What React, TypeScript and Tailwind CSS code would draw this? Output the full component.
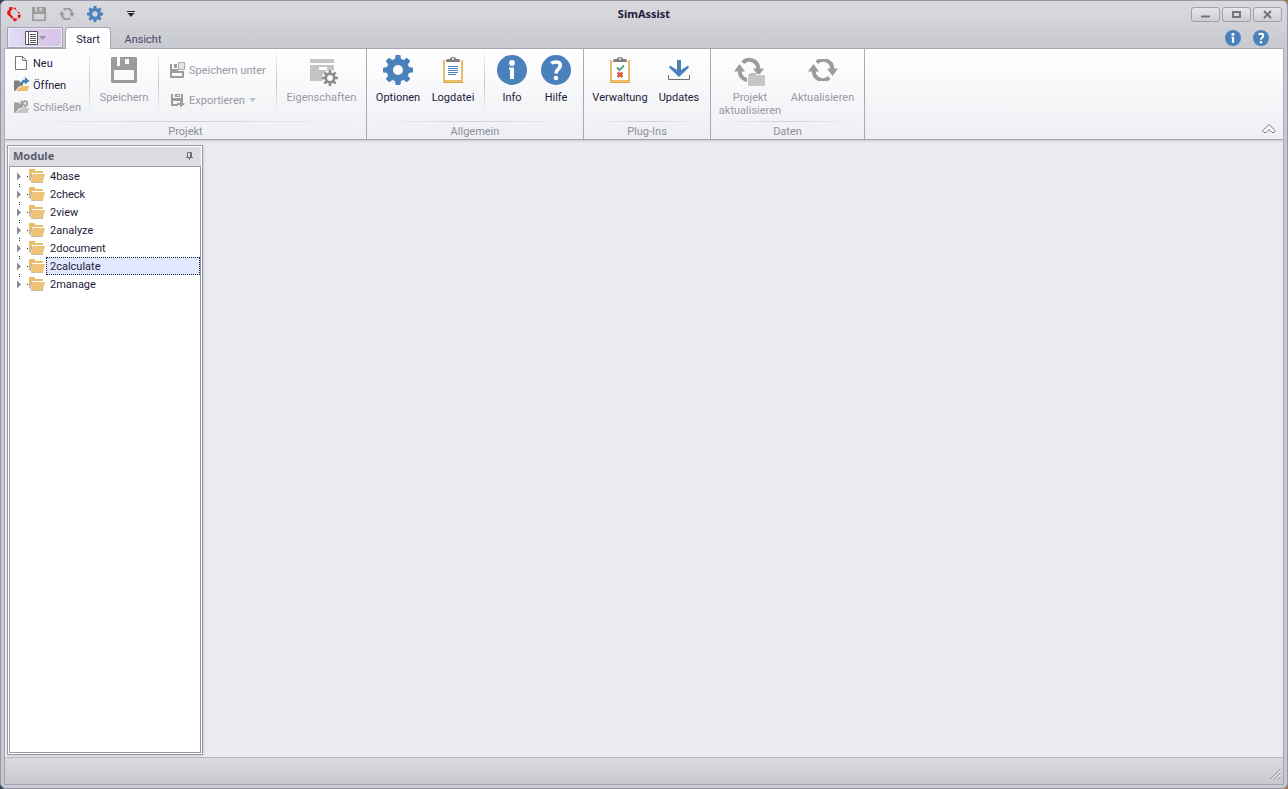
import React, { useState } from 'react';

type IconProps = { className?: string };

const BLUE = '#4a81bb';
const GREY = '#9c9c9c';

function Gear({ className = '', color = BLUE }: IconProps & { color?: string }) {
  return (
    <svg viewBox="0 0 30 30" className={className} aria-hidden="true">
      <circle cx="15" cy="15" r="8.2" fill="none" stroke={color} strokeWidth="6.4" />
      {[0, 45, 90, 135, 180, 225, 270, 315].map((a) => (
        <path key={a} d="M12 5 L12.4 0.8 Q12.5 0 13.3 0 H16.7 Q17.5 0 17.6 0.8 L18 5 Z" fill={color} transform={`rotate(${a} 15 15)`} />
      ))}
    </svg>
  );
}

function Floppy({ className = '' }: IconProps) {
  return (
    <svg viewBox="0 0 26 26" className={className} aria-hidden="true">
      <path
        fillRule="evenodd"
        fill={GREY}
        d="M1.5 0 H6 V9 H20 V0 H24.5 Q26 0 26 1.5 V24.5 Q26 26 24.5 26 H1.5 Q0 26 0 24.5 V1.5 Q0 0 1.5 0 Z M4 13 Q3 13 3 14 V22 Q3 23 4 23 H22 Q23 23 23 22 V14 Q23 13 22 13 Z"
      />
      <path fillRule="evenodd" fill={GREY} d="M9 0 H20 V9 H9 Z M14 2 V7 H18 V2 Z" />
    </svg>
  );
}

function RefreshShape() {
  return (
    <>
      <path d="M8.800 3.600 A9 9 0 0 1 24.200 10.500" fill="none" stroke={GREY} strokeWidth="4" />
      <path d="M21.200 18.400 A9 9 0 0 1 5.800 11.500" fill="none" stroke={GREY} strokeWidth="4" />
      <path d="M0 12.500 L5.500 5 L11 12.500 Z M19 9.500 H30 L24.500 17 Z" fill={GREY} />
    </>
  );
}

function Refresh({ className = '' }: IconProps) {
  return (
    <svg viewBox="0 0 30 22" className={className} aria-hidden="true">
      <RefreshShape />
    </svg>
  );
}

function RefreshProject() {
  return (
    <svg viewBox="0 -5 32 32" className="size-8" aria-hidden="true">
      <RefreshShape />
      <path d="M13 17 H14 L15 14 H22 L23 15 H30 Q32 15 32 17 V28 H13 Z" fill="#fbfbfc" />
      <path d="M14 17 Q14 16 15 16 L16 15 H21 L22 16 H30 Q31 16 31 17 V26 Q31 27 30 27 H15 Q14 27 14 26 Z" fill="#c6c6c6" />
      <path d="M15 15.500 L22 14.500" stroke={GREY} fill="none" />
    </svg>
  );
}

function InfoDisc({ className = '' }: IconProps) {
  return (
    <svg viewBox="0 0 30 30" className={className} aria-hidden="true">
      <circle cx="15" cy="15" r="15" fill={BLUE} />
      <circle cx="15" cy="8" r="2.900" fill="#fff" />
      <path d="M12 12.500 H17 V24 H13 V14.500 H12 Z" fill="#fff" />
    </svg>
  );
}

function HelpDisc({ className = '' }: IconProps) {
  return (
    <svg viewBox="0 0 30 30" className={className} aria-hidden="true">
      <circle cx="15" cy="15" r="15" fill={BLUE} />
      <path d="M10.500 8.500 C12 6.800 19.500 5.600 19.300 10.800 C19.200 14 15 14 15 18.500" fill="none" stroke="#fff" strokeWidth="3.600" />
      <circle cx="15" cy="23" r="2.300" fill="#fff" />
    </svg>
  );
}

function Clipboard({ check = false }: { check?: boolean }) {
  return (
    <svg viewBox="0 0 20 26" className="h-[26px] w-5" aria-hidden="true">
      <path d="M0 3 H20 V26 H0 Z" fill="#eabd6b" />
      <path d="M2 3 H18 V23 H2 Z" fill="#fff" />
      <path d="M0 25.500 H20" stroke="#dda743" />
      <path d="M3 5 V4 Q3 2 5 2 H7 Q7 0 10 0 Q13 0 13 2 H15 Q17 2 17 4 V5 Z" fill="#7d7d7d" />
      <circle cx="10" cy="2" r="1" fill="#fff" />
      {check ? (
        <>
          <path d="M7 10.500 L9.500 13 L14 8.500" fill="none" stroke="#5ba38c" strokeWidth="2" />
          <path d="M7.500 15.500 L12.500 20 M12.500 15.500 L7.500 20" stroke="#dc5a3c" strokeWidth="2.400" />
        </>
      ) : (
        <path d="M5 9.500 H15 M5 11.500 H15 M5 13.500 H15 M5 15.500 H15 M5 17.500 H13" stroke={BLUE} />
      )}
    </svg>
  );
}

function Download() {
  return (
    <svg viewBox="0 0 22 20" className="h-5 w-[22px]" aria-hidden="true">
      <path d="M9 0 H13 V10 L20 5.500 L21 7.500 L11 17 L1 7.500 L2 5.500 L9 10 Z" fill={BLUE} />
      <path d="M0.500 15 V19.500 H21.500 V15" fill="none" stroke="#6f6f6f" />
    </svg>
  );
}

function Properties() {
  return (
    <svg viewBox="-4 -5 32 32" className="size-8" aria-hidden="true">
      <path d="M0 0 H24 V4 H0 Z M0 6 H24 V22 H0 Z" fill="#c4c4c4" />
      <path d="M9 8 H17 V11 H9 Z" fill="#fff" />
      <circle cx="20" cy="19" r="8" fill="#fbfbfc" />
      <circle cx="20" cy="19" r="4.300" fill="none" stroke="#8d8d8d" strokeWidth="2.800" />
      {[0, 45, 90, 135, 180, 225, 270, 315].map((a) => (
        <path key={a} d="M18.700 11 H21.300 V14.500 H18.700 Z" fill="#8d8d8d" transform={`rotate(${a} 20 19)`} />
      ))}
    </svg>
  );
}

function PageIcon() {
  return (
    <svg viewBox="0 0 16 16" className="size-4" aria-hidden="true">
      <path d="M1.500 1.500 H8.500 L12.500 5.500 V14.500 H1.500 Z" fill="#fff" stroke="#767676" />
      <path d="M8.500 1.500 V5.500 H12.500" fill="none" stroke="#767676" />
    </svg>
  );
}

function OpenIcon({ closed = false }: { closed?: boolean }) {
  return (
    <svg viewBox="0 0 16 16" className="size-4" aria-hidden="true">
      <path d="M0 3.500 H5 L6 5 H9 V8.500 L5 9.500 L1 14 H0 Z" fill={closed ? '#a0a0a0' : '#808080'} />
      <path d="M5.500 10.500 L9 9 H15.500 L13.500 14 H2 Z" fill={closed ? '#c5c5c5' : '#eabd6b'} />
      {closed ? (
        <path d="M7.500 1.500 V5.500 H11 M8 4.500 Q10.500 0.500 13 3 Q14.500 6 10 8" fill="none" stroke="#a0a0a0" strokeWidth="1.800" />
      ) : (
        <path d="M7 8 Q6.500 2.500 11 2.500 V0 L15.500 4 L11 7.500 V5.500 Q8.500 5.500 7 8 Z" fill={BLUE} />
      )}
    </svg>
  );
}

function SaveAsIcon() {
  return (
    <svg viewBox="0 0 16 16" className="size-4" aria-hidden="true">
      <path fillRule="evenodd" fill={GREY} d="M0 2 H2 V7 H8 V9 H14 V16 H0 Z M2 11 V14 H12 V11 Z M4 2 H7 V6 H4 Z" />
      <path d="M8.500 0.500 H14.500 V7.500 H8.500 Z" fill="#e4e4e4" stroke="#ababab" />
    </svg>
  );
}

function ExportIcon() {
  return (
    <svg viewBox="0 0 16 16" className="size-4" aria-hidden="true">
      <path fillRule="evenodd" fill={GREY} d="M1 2 H3 V6 H11 V2 H13 V10 H11 V9 H3 V12 H8 V14 H1 Z M5 2 H10 V5 H5 Z M7 3 V4 H9 V3 Z" />
      <path d="M7 11 H10 V8.500 L15 12 L10 15.500 V13 H7 Z" fill={GREY} />
    </svg>
  );
}

function FolderIcon() {
  return (
    <svg viewBox="0 0 16 14" className="h-3.5 w-4" aria-hidden="true">
      <path d="M0 0 H6 V2 H14 V4 H3 L1 11 H0 Z" fill="#eabd6b" />
      <path d="M1 12 L3 5" stroke="#a6a6a6" fill="none" />
      <path d="M3.500 5 H16 L14 13 H2 Z" fill="#eec377" />
      <path d="M2 13.500 H14" stroke="#c9bda6" />
    </svg>
  );
}

function AppLogo() {
  return (
    <svg viewBox="0 0 16 16" className="size-4" aria-hidden="true">
      <path d="M5 1.500 L9 2.500 L13 7 L13.500 10.500 L9 14 L5 12" fill="none" stroke="#ea5a5e" strokeWidth="0.800" />
      <path d="M3.500 1 L6 1 L6.500 3.500 L4.500 5 L4.500 8 L7.500 11.500 L6 12.500 L2.500 9.500 L1 7.500 L1.500 5 L3 4 Z" fill="#e5161d" />
      <path d="M11.500 9 L15 9 L14 12 L12.500 12.500 Z M8 11.500 L11.500 14 L9 15.500 L7 14.500 Z M8 1.500 L10 2 L10 3.500 L8.500 3.500 Z M12 6 L13.500 6 L13.500 7.500 L12 7.500 Z" fill="#e5161d" />
    </svg>
  );
}

function BigButton({ label, icon, width, disabled = false }: { label: string; icon: React.ReactNode; width: string; disabled?: boolean }) {
  return (
    <button type="button" disabled={disabled} className={`flex shrink-0 flex-col items-center gap-[5px] pt-[5px] ${width} ${disabled ? 'text-[#9898a6]' : 'text-[#1e1a3a]'}`}>
      <span className="flex h-8 items-center justify-center">{icon}</span>
      <span className="text-center leading-[13px]">{label}</span>
    </button>
  );
}

function SmallButton({ label, icon, disabled = false, menu = false }: { label: string; icon: React.ReactNode; disabled?: boolean; menu?: boolean }) {
  return (
    <button type="button" disabled={disabled} className={`flex h-[22px] items-center gap-[3px] whitespace-nowrap ${disabled ? 'text-[#9898a6]' : 'text-[#1e1a3a]'}`}>
      {icon}
      <span>{label}</span>
      {menu && (
        <svg viewBox="0 0 7 4" className="ml-px h-1 w-[7px]" aria-hidden="true">
          <path d="M0 0 H7 L3.500 4 Z" fill="#c0c0c8" />
        </svg>
      )}
    </button>
  );
}

function Divider() {
  return <span className="h-[66px] w-px shrink-0 bg-linear-to-b from-transparent via-[#c3c3cd] to-transparent" />;
}

function Group({ title, children }: { title: string; children: React.ReactNode }) {
  return (
    <section aria-label={title} className="flex shrink-0 flex-col border-r border-[#a9a9b6]">
      <div className="flex h-[72px]">{children}</div>
      <div className="mx-2 h-px bg-linear-to-r from-transparent via-[#cfcfd7] to-transparent" />
      <h2 className="h-[17px] text-center leading-5 text-[#8e8e9c]">{title}</h2>
    </section>
  );
}

function CaptionButton({ label, children }: { label: string; children: React.ReactNode }) {
  return (
    <button
      type="button"
      aria-label={label}
      className="flex h-[15px] w-[29px] items-center justify-center rounded-[3px] border border-[#a0a0ad] bg-linear-to-b from-[#e6e6ea] to-[#cdcdd4]"
    >
      <svg viewBox="0 0 11 9" className="h-[9px] w-[11px]" fill="none" stroke="#74747f" aria-hidden="true">
        {children}
      </svg>
    </button>
  );
}

const MODULES = ['4base', '2check', '2view', '2analyze', '2document', '2calculate', '2manage'];

function ModuleTree() {
  const [selected, setSelected] = useState('2calculate');
  return (
    <ul className="flex-1 border border-[#9a9aa6] bg-white">
      {MODULES.map((name, i) => (
        <li key={name} className="flex h-[18px] items-center">
          <svg viewBox="0 0 19 18" className="h-[18px] w-[19px] shrink-0" shapeRendering="crispEdges" aria-hidden="true">
            <path d="M7 5.500 L11 9.500 L7 13.500 Z" fill="#8a8a94" shapeRendering="auto" />
            {i > 0 && <path d="M9 1 H10 V2 H9 Z" fill="#222" />}
            {i < MODULES.length - 1 && <path d="M9 17 H10 V18 H9 Z" fill="#222" />}
            <path d="M17 9 H18 V10 H17 Z" fill="#222" />
          </svg>
          <FolderIcon />
          <button
            type="button"
            onClick={() => setSelected(name)}
            className={`ml-px h-[18px] flex-1 border border-dotted pl-[3px] pt-px text-left leading-4 text-[#1e1a3a] ${
              selected === name ? 'border-[#1a1a3a] bg-[#e1e8fd]' : 'border-transparent'
            }`}
          >
            {name}
          </button>
        </li>
      ))}
    </ul>
  );
}

export default function App() {
  return (
    <div className="h-screen bg-linear-to-r from-[#31424e] to-[#9b7b55] text-[11px] leading-[13px]" style={{ fontFamily: 'Roboto, "Noto Sans", sans-serif' }}>
      <div className="flex h-full flex-col overflow-hidden rounded-md border border-[#9696a6] bg-[#c8c8d0] px-[3px] pb-[3px]">
        <header className="-mx-[3px] bg-linear-to-b from-[#dadade] to-[#c8c8d0] px-[3px]">
          <div className="grid h-[26px] grid-cols-[1fr_auto_1fr] items-center">
            <div className="flex items-center pl-0.5">
              <AppLogo />
              <button type="button" aria-label="Speichern" disabled className="ml-[10px]">
                <Floppy className="size-3.5" />
              </button>
              <button type="button" aria-label="Aktualisieren" disabled className="ml-[13px]">
                <Refresh className="h-3 w-4" />
              </button>
              <button type="button" aria-label="Optionen" className="ml-3">
                <Gear className="size-4" />
              </button>
              <button type="button" aria-label="Symbolleiste anpassen" className="ml-6">
                <svg viewBox="0 0 8 6" className="h-1.5 w-2" aria-hidden="true">
                  <path d="M0 0 H8 V1 H0 Z M0.500 2 H7.500 L4 6 Z" fill="#24242c" />
                </svg>
              </button>
            </div>
            <h1 className="pb-0.5 font-['Noto_Sans',sans-serif] font-bold text-[#1e1a3a]">SimAssist</h1>
            <div className="flex justify-end gap-0.5 pr-0.5">
              <CaptionButton label="Minimieren">
                <path d="M1 6.500 H10" strokeWidth="2" />
              </CaptionButton>
              <CaptionButton label="Maximieren">
                <path d="M2 2 H9 V7 H2 Z" strokeWidth="2" />
              </CaptionButton>
              <CaptionButton label="Beenden">
                <path d="M2 1 L9 8 M9 1 L2 8" strokeWidth="2" />
              </CaptionButton>
            </div>
          </div>
          <nav className="flex h-[22px] items-stretch pl-[3px] shadow-[inset_0_-1px_0_#a3a3b2]">
            <button
              type="button"
              aria-label="Anwendungsmenü"
              className="mb-px flex w-14 items-center justify-center gap-px border border-[#a3a3b2] bg-linear-to-r from-[#e2def7] via-[#dccbea] to-[#d6c4ea] inset-ring inset-ring-[#ece8f6]"
            >
              <svg viewBox="0 0 13 14" className="h-3.5 w-[13px]" aria-hidden="true">
                <path d="M0.500 0.500 H12.500 V13.500 H0.500 Z" fill="#fff" stroke="#55555d" />
                <path d="M3.500 0 V14 M5 3.500 H11 M5 5.500 H11 M5 7.500 H11 M5 9.500 H11 M5 11.500 H11" stroke="#55555d" />
              </svg>
              <svg viewBox="0 0 7 4" className="h-1 w-[7px]" aria-hidden="true">
                <path d="M0 0 H7 L3.500 4 Z" fill="#9a92a8" />
              </svg>
            </button>
            <button type="button" className="ml-0.5 w-[46px] rounded-t-sm border border-b-0 border-[#a3a3b2] bg-white pt-px text-[#1e1a3a]">
              Start
            </button>
            <button type="button" className="w-16 pt-0.5 text-[#4a4a66]">
              Ansicht
            </button>
            <span className="flex-1" />
            <button type="button" aria-label="Info">
              <InfoDisc className="size-4" />
            </button>
            <button type="button" aria-label="Hilfe" className="ml-3 mr-[15px]">
              <HelpDisc className="size-4" />
            </button>
          </nav>
        </header>

        <div className="flex min-h-0 flex-1 flex-col border border-t-0 border-[#a3a3b2] bg-[#eaebef]">
          <div className="flex h-[91px] shrink-0 border-b border-[#a3a3b2] bg-linear-to-b from-white to-[#eeeff3] shadow-[0_1px_2px_#c9c9d0]">
            <Group title="Projekt">
              <div className="flex w-[84px] flex-col pl-[9px] pt-[3px]">
                <SmallButton label="Neu" icon={<PageIcon />} />
                <SmallButton label="Öffnen" icon={<OpenIcon />} />
                <SmallButton label="Schließen" icon={<OpenIcon closed />} disabled />
              </div>
              <Divider />
              <BigButton label="Speichern" icon={<Floppy className="size-[26px]" />} width="w-[68px]" disabled />
              <Divider />
              <div className="flex w-[117px] flex-col gap-2 pl-[11px] pt-2.5">
                <SmallButton label="Speichern unter" icon={<SaveAsIcon />} disabled />
                <SmallButton label="Exportieren" icon={<ExportIcon />} disabled menu />
              </div>
              <Divider />
              <BigButton label="Eigenschaften" icon={<Properties />} width="w-[89px]" disabled />
            </Group>
            <Group title="Allgemein">
              <div className="flex pl-[3px] pr-1">
                <BigButton label="Optionen" icon={<Gear className="size-[30px]" />} width="w-14" />
                <BigButton label="Logdatei" icon={<Clipboard />} width="w-[54px]" />
              </div>
              <Divider />
              <div className="flex px-[5px]">
                <BigButton label="Info" icon={<InfoDisc className="size-[30px]" />} width="w-11" />
                <BigButton label="Hilfe" icon={<HelpDisc className="size-[30px]" />} width="w-11" />
              </div>
            </Group>
            <Group title="Plug-Ins">
              <div className="flex pl-[5px] pr-[3px]">
                <BigButton label="Verwaltung" icon={<Clipboard check />} width="w-[62px]" />
                <BigButton label="Updates" icon={<Download />} width="w-14" />
              </div>
            </Group>
            <Group title="Daten">
              <div className="flex gap-0.5 px-[5px]">
                <BigButton label="Projekt aktualisieren" icon={<RefreshProject />} width="w-[68px]" disabled />
                <BigButton label="Aktualisieren" icon={<Refresh className="h-[22px] w-[30px]" />} width="w-[73px]" disabled />
              </div>
            </Group>
            <div className="flex flex-1 items-end justify-end pb-[5px] pr-[7px]">
              <button type="button" aria-label="Menüband minimieren">
                <svg viewBox="0 0 14 10" className="h-2.5 w-3.5" fill="#fff" stroke="#70707c" strokeLinejoin="round" aria-hidden="true">
                  <path d="M7 0.500 L13 6.500 V7.500 L12 8.500 H10 L7 5.500 L4 8.500 H2 L1 7.500 V6.500 Z" />
                </svg>
              </button>
            </div>
          </div>

          <main className="flex min-h-0 flex-1 pb-0.5 pl-0.5 pt-[5px]">
            <aside className="flex w-[196px] flex-col border border-[#9a9aa6] bg-white p-px shadow-[1px_1px_2px_#cfcfd6]">
              <div className="flex h-[19px] items-center justify-between bg-[#dcdce1] pb-0.5 pl-1 pr-2">
                <h2 className="font-['Noto_Sans',sans-serif] font-bold text-[#5c5c70]">Module</h2>
                <button type="button" aria-label="Automatisch ausblenden">
                  <svg viewBox="0 0 7 8" className="h-2 w-[7px]" fill="none" stroke="#6e6e7a" aria-hidden="true">
                    <path d="M1.500 5 V0.500 H5.500 V5 M4.500 1 V5 M0 5.500 H7 M3.500 5.500 V8" />
                  </svg>
                </button>
              </div>
              <ModuleTree />
            </aside>
          </main>

          <footer className="flex h-[27px] shrink-0 items-end justify-end border-t border-[#b5b5c0] bg-linear-to-b from-[#dadbdf] to-[#c8c9ce] pb-1 pr-0.5">
            <svg viewBox="0 0 12 12" className="size-3" fill="none" aria-hidden="true">
              <path d="M1 11.500 L11.500 1 M5 11.500 L11.500 5 M9 11.500 L11.500 9" stroke="#8a8a96" />
              <path d="M2 12 L12 2 M6 12 L12 6" stroke="#f2f2f4" strokeWidth="0.800" />
            </svg>
          </footer>
        </div>
      </div>
    </div>
  );
}
